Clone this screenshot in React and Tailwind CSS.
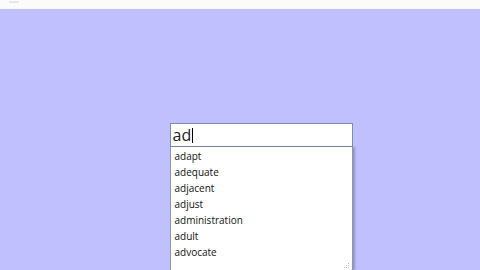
export default function App() {
  const items = ["adapt", "adequate", "adjacent", "adjust", "administration", "adult", "advocate"];
  return (
    <div className="w-[480px] h-[270px] bg-[#c0c0ff] flex flex-col overflow-hidden" style={{ fontFamily: '"Open Sans", "Noto Sans", sans-serif' }}>
      <div className="h-[9px] bg-[#fbfcfa] shrink-0 flex items-start pl-[9px]">
        <div className="w-[10px] h-[2px] mt-[1px] bg-[#e4e7ee]" />
      </div>
      <div className="flex-1 flex justify-center pl-[42px] pt-[114px]">
        <div className="w-[183px] flex flex-col">
          <div className="h-[24px] bg-white border border-[#7a8fa8] flex items-center pl-[2px] text-[16px] text-[#222] leading-none">
            ad<span className="inline-block w-[1px] h-[15px] bg-black ml-[1px]" />
          </div>
          <div className="flex-1 h-[130px] bg-white border-l border-r border-[#8d97a5] relative shadow-[2px_0_2px_rgba(80,80,120,0.4)] pt-[1px] pl-[4px]">
            {items.map((t) => (
              <div key={t} className="h-[16px] text-[10px] leading-[16px] text-[#111]">{t}</div>
            ))}
            <svg className="absolute right-[2px] bottom-[1px]" width="7" height="7" viewBox="0 0 7 7">
              <rect x="5" y="1" width="1" height="1" fill="#bbb" />
              <rect x="3" y="3" width="1" height="1" fill="#bbb" />
              <rect x="5" y="3" width="1" height="1" fill="#bbb" />
              <rect x="1" y="5" width="1" height="1" fill="#bbb" />
              <rect x="3" y="5" width="1" height="1" fill="#bbb" />
              <rect x="5" y="5" width="1" height="1" fill="#bbb" />
            </svg>
          </div>
        </div>
      </div>
    </div>
  );
}
